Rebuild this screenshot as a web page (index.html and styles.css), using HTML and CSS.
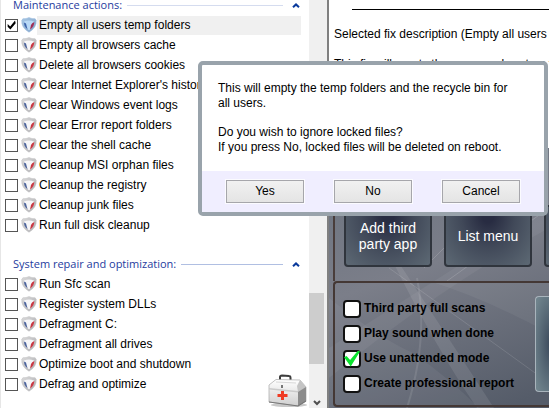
FILE: index.html
```html
<!DOCTYPE html>
<html lang="en">
<head>
<meta charset="utf-8">
<title>Repair tool</title>
<link rel="stylesheet" href="styles.css">
</head>
<body>
<svg class="defs" aria-hidden="true">
  <defs>
    <linearGradient id="metal" x1="0" y1="0" x2="1" y2="1">
      <stop offset="0" stop-color="#dcdcdd"/><stop offset="1" stop-color="#aaaaac"/>
    </linearGradient>
    <linearGradient id="metal-blue" x1="0" y1="0" x2="1" y2="1">
      <stop offset="0" stop-color="#a9c8e6"/><stop offset="1" stop-color="#7d9fc4"/>
    </linearGradient>
    <linearGradient id="case" x1="0" y1="0" x2="0" y2="1">
      <stop offset="0" stop-color="#ffffff"/><stop offset="1" stop-color="#cfcfcf"/>
    </linearGradient>
    <symbol id="shield" viewBox="0 0 16 16">
      <path d="M.8 3Q2 1 4 1.700Q6 1.400 8 .6Q10 1.400 12 1.700Q14 1 15.200 3Q16 10.500 8 15.200Q0 10.500 .8 3Z" fill="url(#metal)" stroke="#c4c4c6" stroke-width=".6"/>
      <path d="M3 4.500Q8 2.300 13 4.500Q13 9.500 8 13.500Q3 9.500 3 4.500Z" fill="#f6f6f8"/>
      <path d="M3 5.500L5 6.500L6.500 12.300Q3 9.500 3 5.500Z" fill="#4a629b"/>
      <path d="M13.300 5Q10.800 6 10 8L9 12.500Q13.300 9.500 13.300 5Z" fill="#c93843"/>
    </symbol>
    <symbol id="shield-blue" viewBox="0 0 16 16">
      <path d="M.8 3Q2 1 4 1.700Q6 1.400 8 .6Q10 1.400 12 1.700Q14 1 15.200 3Q16 10.500 8 15.200Q0 10.500 .8 3Z" fill="url(#metal-blue)" stroke="#9fbfe0" stroke-width=".6"/>
      <path d="M3 4.500Q8 2.300 13 4.500Q13 9.500 8 13.500Q3 9.500 3 4.500Z" fill="#b9d9f6"/>
      <path d="M3 5.500L5 6.500L6.500 12.300Q3 9.500 3 5.500Z" fill="#3b62ab"/>
      <path d="M13.300 5Q10.800 6 10 8L9 12.500Q13.300 9.500 13.300 5Z" fill="#a02c54"/>
    </symbol>
    <symbol id="chevron" viewBox="0 0 8 5">
      <path d="M1 4.200L4 1.400L7 4.200" fill="none" stroke="#0a3a9c" stroke-width="2"/>
    </symbol>
  </defs>
</svg>
<main class="app">
  <section class="sidebar">
    <div class="list">
      <section class="group">
        <h2 class="group-title">Maintenance actions:<span class="rule"></span><svg class="chevron"><use href="#chevron"/></svg></h2>
        <label class="item selected"><input type="checkbox" checked><svg class="shield"><use href="#shield-blue"/></svg><span>Empty all users temp folders</span></label>
        <label class="item"><input type="checkbox"><svg class="shield"><use href="#shield"/></svg><span>Empty all browsers cache</span></label>
        <label class="item"><input type="checkbox"><svg class="shield"><use href="#shield"/></svg><span>Delete all browsers cookies</span></label>
        <label class="item"><input type="checkbox"><svg class="shield"><use href="#shield"/></svg><span>Clear Internet Explorer's history</span></label>
        <label class="item"><input type="checkbox"><svg class="shield"><use href="#shield"/></svg><span>Clear Windows event logs</span></label>
        <label class="item"><input type="checkbox"><svg class="shield"><use href="#shield"/></svg><span>Clear Error report folders</span></label>
        <label class="item"><input type="checkbox"><svg class="shield"><use href="#shield"/></svg><span>Clear the shell cache</span></label>
        <label class="item"><input type="checkbox"><svg class="shield"><use href="#shield"/></svg><span>Cleanup MSI orphan files</span></label>
        <label class="item"><input type="checkbox"><svg class="shield"><use href="#shield"/></svg><span>Cleanup the registry</span></label>
        <label class="item"><input type="checkbox"><svg class="shield"><use href="#shield"/></svg><span>Cleanup junk files</span></label>
        <label class="item"><input type="checkbox"><svg class="shield"><use href="#shield"/></svg><span>Run full disk cleanup</span></label>
      </section>
      <section class="group">
        <h2 class="group-title">System repair and optimization:<span class="rule strong"></span><svg class="chevron"><use href="#chevron"/></svg></h2>
        <label class="item"><input type="checkbox"><svg class="shield"><use href="#shield"/></svg><span>Run Sfc scan</span></label>
        <label class="item"><input type="checkbox"><svg class="shield"><use href="#shield"/></svg><span>Register system DLLs</span></label>
        <label class="item"><input type="checkbox"><svg class="shield"><use href="#shield"/></svg><span>Defragment C:</span></label>
        <label class="item"><input type="checkbox"><svg class="shield"><use href="#shield"/></svg><span>Defragment all drives</span></label>
        <label class="item"><input type="checkbox"><svg class="shield"><use href="#shield"/></svg><span>Optimize boot and shutdown</span></label>
        <label class="item"><input type="checkbox"><svg class="shield"><use href="#shield"/></svg><span>Defrag and optimize</span></label>
      </section>
    </div>
    <div class="scrollbar">
      <div class="thumb"></div>
      <svg class="down" viewBox="0 0 8 6"><path d="M1 1L4 4L7 1" fill="none" stroke="#505050" stroke-width="2"/></svg>
    </div>
    <svg class="medkit" viewBox="0 0 40 34">
      <ellipse cx="21" cy="31" rx="18" ry="2" fill="#c8c8c8"/>
      <path d="M12 7V3Q12 1.500 14 1.500L21 2Q22.500 2 22.500 4V8" fill="none" stroke="#3d3d3d" stroke-width="2"/>
      <path d="M1 11L8 5.500L32 6L38 13V27L30 32L1 28Z" fill="url(#case)" stroke="#a8a8a8" stroke-width=".7"/>
      <path d="M31 13L38 13V27L30 32V18Z" fill="#8c8c8c"/>
      <path d="M32 6L38 13L30 18L29 12Z" fill="#c4c4c4"/>
      <path d="M1 14L30 17V18.500L1 15.500Z" fill="#cacaca"/>
      <path d="M8 8L28 9" stroke="#d8d8d8"/>
      <path d="M1 28L30 32L38 27" fill="none" stroke="#777" stroke-width="1.200"/>
      <rect x="13" y="11" width="2" height="3" fill="#777"/>
      <path d="M13 17H16V20H19.500V23H16V26H13V23H9.500V20H13Z" fill="#ef3b24"/>
    </svg>
  </section>

  <section class="detail">
    <article class="description">
      <hr>
      <p>Selected fix description (Empty all users temp folders):</p>
      <p>This fix will empty the users and system temp folders.</p>
    </article>
    <div class="console">
      <svg class="swirls" viewBox="0 0 220 260" preserveAspectRatio="none" aria-hidden="true">
        <path d="M0 200Q110 130 220 60V80Q110 140 0 230Z" fill="#fff" opacity=".05"/>
        <path d="M50 85Q100 160 165 260H148Q100 190 50 85Z" fill="#fff" opacity=".09"/>
        <path d="M88 130Q100 190 78 260" fill="none" stroke="#fff" stroke-width="2" opacity=".1"/>
        <path d="M60 120Q130 170 220 235" fill="none" stroke="#fff" opacity=".12"/>
        <path d="M100 133Q155 150 220 185V133Z" fill="#fff" opacity=".05"/>
        <path d="M0 150Q50 190 84 205Q120 230 150 260H0Z" fill="#fff" opacity=".05"/>
        <path d="M95 120L135 80M118 133L220 60" stroke="#fff" opacity=".15"/>
      </svg>
      <div class="tiles">
        <button class="tile">Add third<br>party app</button>
        <button class="tile">List menu</button>
        <button class="tile" aria-label="More"></button>
      </div>
      <div class="options">
        <div class="checks">
          <label class="option"><input type="checkbox">Third party full scans</label>
          <label class="option"><input type="checkbox">Play sound when done</label>
          <label class="option"><input type="checkbox" checked>Use unattended mode</label>
          <label class="option"><input type="checkbox">Create professional report</label>
        </div>
        <button class="action" aria-label="Start"></button>
      </div>
    </div>
  </section>
</main>

<div class="dialog" role="dialog" aria-label="Confirm">
  <div class="message">
    <p>This will empty the temp folders and the recycle bin for<br>all users.</p>
    <p>Do you wish to ignore locked files?<br>If you press No, locked files will be deleted on reboot.</p>
  </div>
  <div class="buttons">
    <button>Yes</button>
    <button>No</button>
    <button>Cancel</button>
  </div>
</div>
</body>
</html>
```
FILE: styles.css
```css
* { box-sizing: border-box; }

body {
  margin: 0;
  height: 100vh;
  overflow: hidden;
  font: 12px/15px "Liberation Sans", Arial, sans-serif;
  color: #000;
  background: #fff;
}

p, h2 { margin: 0; }
button, input { margin: 0; font: inherit; }
.defs { position: absolute; width: 0; height: 0; }

.app {
  display: grid;
  grid-template-columns: 327px minmax(0, 1fr);
  height: 100%;
}

/* Sidebar */
.sidebar {
  position: relative;
  display: flex;
  min-height: 0;
  overflow: hidden;
  border-left: 1px solid #e6e6e6;
}

.list {
  flex: 1;
  display: flex;
  flex-direction: column;
  gap: 19px;
  margin-top: -5px;
  padding: 0 8px 0 4px;
}

.group-title {
  display: flex;
  align-items: center;
  gap: 5px;
  height: 20px;
  padding-left: 8px;
  font: 11px/16px "Open Sans", "Noto Sans", sans-serif;
  color: #1e3c9e;
  white-space: nowrap;
}

.rule { flex: 1; height: 1px; background: #d5dcef; }
.rule.strong { background: #b0bfe2; }
.chevron { width: 8px; height: 5px; margin: 0 1px 0 4px; }

.item {
  display: flex;
  align-items: center;
  gap: 3px;
  height: 20px;
  font-size: 12px;
  white-space: nowrap;
}

.item span { line-height: 19px; padding: 0 2px; margin-left: -3px; }
.item.selected span { flex: 1; background: #f0f0f0; }

.item input {
  appearance: none;
  width: 13px;
  height: 13px;
  border: 1px solid #555;
  background: #fff;
}

.item input:checked::before {
  content: "";
  display: block;
  width: 11px;
  height: 11px;
  background: #000;
  clip-path: polygon(15% 42%, 38% 64%, 82% 10%, 88% 34%, 40% 92%, 15% 66%);
}

.shield { width: 16px; height: 16px; }

.scrollbar {
  display: flex;
  flex-direction: column;
  align-items: center;
  width: 18px;
  padding: 0 3px 2px 0;
  background: #f0f0f0;
}

.thumb { width: 100%; height: 71px; margin-top: auto; background: #cdcdcd; }
.down { width: 8px; height: 6px; margin-top: 36px; }

.medkit {
  position: absolute;
  right: 19px;
  bottom: 0;
  width: 40px;
  height: 34px;
}

/* Right side */
.detail {
  display: flex;
  flex-direction: column;
  min-width: 0;
  border-left: 2px solid #808080;
}

.description {
  height: 148px;
  padding: 9px 0 0 5px;
  white-space: nowrap;
  overflow: hidden;
  background: #fff;
}

.description hr { height: 1px; margin: 0 0 17px 18px; border: 0; background: #000; }
.description p { margin-bottom: 15px; }

.console {
  position: relative;
  flex: 1;
  display: flex;
  flex-direction: column;
  min-height: 0;
  padding: 0 0 1px 4px;
  overflow: hidden;
  background: linear-gradient(160deg, #6d7480 10%, #7b7e89 45%, #555c69 95%);
}

.swirls { position: absolute; inset: 0; width: 100%; height: 100%; }

.tiles {
  position: relative;
  flex: 1;
  display: flex;
  align-items: flex-end;
  gap: 12px;
  padding: 0 0 14px 9px;
  border-left: 2px solid #493d3b;
}

.tile {
  flex: 0 0 88px;
  height: 62px;
  padding: 0;
  border: 2px solid #30353d;
  border-radius: 4px;
  font-size: 14px;
  line-height: 16px;
  color: #fff;
  background: radial-gradient(ellipse at 50% 15%, #282c42 10%, #414959 45%, #5d6974 100%);
}

.options {
  position: relative;
  display: flex;
  justify-content: space-between;
  height: 126px;
  padding: 13px 0 0 8px;
  border: 2px solid #443835;
  border-right: 0;
  border-radius: 4px 0 0 4px;
}

.checks { display: grid; grid-template-rows: repeat(4, 25px); }

.option {
  display: flex;
  align-items: center;
  gap: 3px;
  font-weight: bold;
  white-space: nowrap;
}

.option input {
  appearance: none;
  width: 18px;
  height: 18px;
  border: 2px solid #111;
  border-radius: 4px;
  background: #fff;
}

.option input:checked::before {
  content: "";
  display: block;
  width: 16px;
  height: 16px;
  margin: -1px;
  background: #0be32f;
  clip-path: polygon(0 42%, 16% 34%, 38% 60%, 88% 0, 100% 6%, 42% 100%);
}

.action {
  width: 14px;
  height: 96px;
  border: 1px solid #a9b4bc;
  border-right: 0;
  border-radius: 4px 0 0 4px;
  background: radial-gradient(ellipse at 110% 50%, #3c4a5c, #6f838c 90%);
}

/* Confirmation dialog */
.dialog {
  position: absolute;
  top: 61px;
  left: 198px;
  width: 350px;
  border: 4px solid #99a3ab;
  border-radius: 5px;
  background: #fff;
}

.message { display: grid; gap: 14px; padding: 16px; }

.buttons {
  display: flex;
  justify-content: center;
  gap: 30px;
  padding: 9px 0;
  background: #f0eeff;
}

.buttons button {
  width: 78px;
  height: 23px;
  padding: 0;
  border: 1px solid #a6a6ab;
  outline: 1px solid #fbfbff;
  background: linear-gradient(#f1f1f1, #e4e4e4);
}
```
